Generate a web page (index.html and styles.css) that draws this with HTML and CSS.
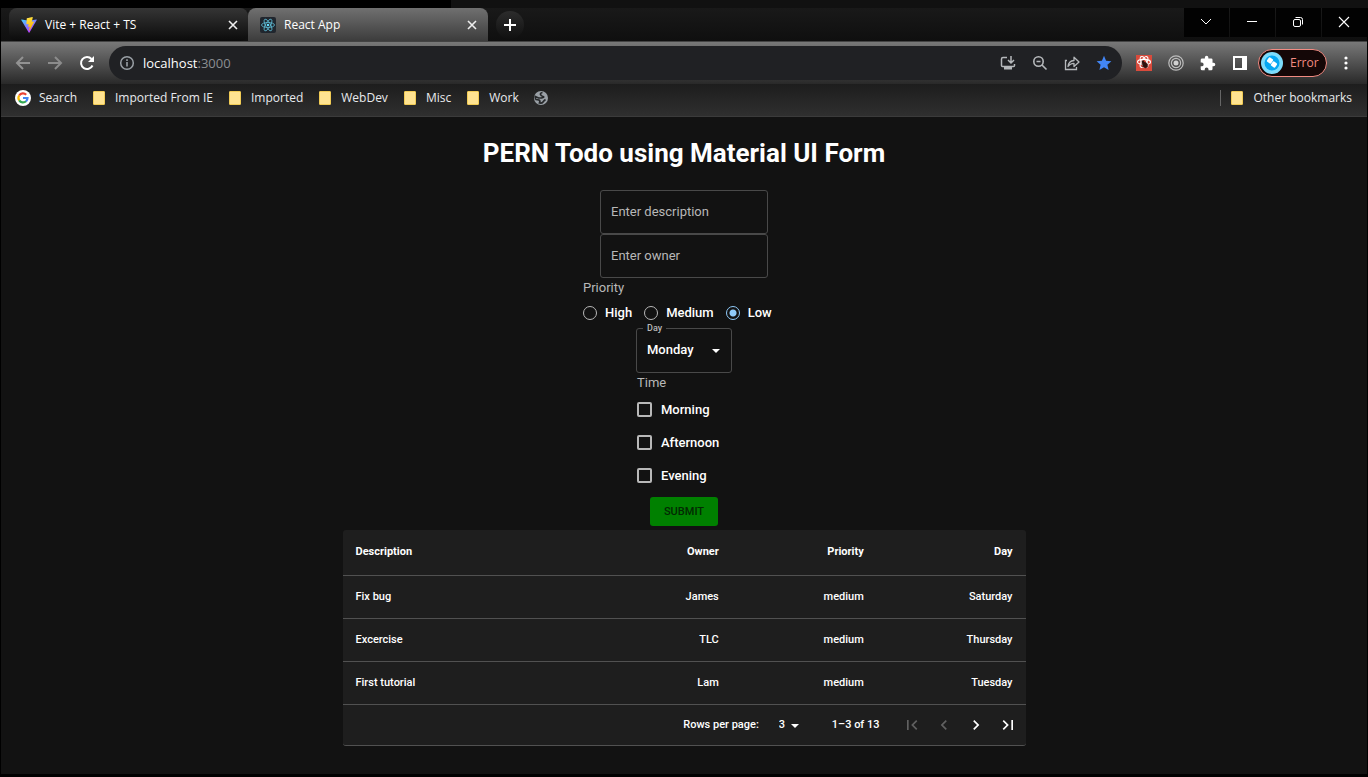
FILE: index.html
```html
<!DOCTYPE html>
<html lang="en">
<head>
<meta charset="utf-8">
<meta name="viewport" content="width=device-width, initial-scale=1">
<title>React App</title>
<link rel="stylesheet" href="styles.css">
</head>
<body>
<div class="backdrop"></div>
<div class="window">
  <header class="tabstrip">
    <div class="tab">
      <svg class="favicon" width="16" height="16" viewBox="0 0 32 32"><defs><linearGradient id="va" x1="0" y1="0" x2=".6" y2="1"><stop offset="0" stop-color="#41d1ff"/><stop offset="1" stop-color="#bd34fe"/></linearGradient><linearGradient id="vb" x1=".4" y1="0" x2=".6" y2="1"><stop offset="0" stop-color="#ffea83"/><stop offset=".1" stop-color="#ffdd35"/><stop offset="1" stop-color="#ffa800"/></linearGradient></defs><path fill="url(#va)" d="M31.5 6 17 31q-.8 1.2-1.6 0L.5 6Q0 4.600 1.500 4.800L16 7.400 30.500 4.800Q32 4.700 31.500 6Z"/><path fill="url(#vb)" d="M22.800.2 12 2.300q-.5.1-.5.6L10.800 14q0 .7.700.6l3-.7q.8-.1.700.7l-.9 4.400q-.1.800.7.600l1.800-.6q.8-.1.700.7l-1.400 6.800q0 1.500 1 .3L26 10q.5-1-.6-1l-3.200.6q-.8.100-.6-.7l2-7.800q.2-1-.8-.9Z"/></svg>
      <span class="tab-title">Vite + React + TS</span>
      <button class="tab-close" aria-label="Close tab"><svg width="10" height="10" viewBox="0 0 10 10"><path d="M1 1l8 8M9 1L1 9" stroke="#eee" stroke-width="1.600"/></svg></button>
    </div>
    <div class="tab tab-active">
      <svg class="favicon" width="16" height="16" viewBox="0 0 32 32"><rect width="32" height="32" rx="4" fill="#20262e"/><g fill="none" stroke="#5bb4cc" stroke-width="1.700"><ellipse cx="16" cy="16" rx="13" ry="5"/><ellipse cx="16" cy="16" rx="13" ry="5" transform="rotate(60 16 16)"/><ellipse cx="16" cy="16" rx="13" ry="5" transform="rotate(120 16 16)"/></g><circle cx="16" cy="16" r="2.600" fill="#61dafb"/></svg>
      <span class="tab-title">React App</span>
      <button class="tab-close" aria-label="Close tab"><svg width="10" height="10" viewBox="0 0 10 10"><path d="M1 1l8 8M9 1L1 9" stroke="#eee" stroke-width="1.600"/></svg></button>
    </div>
    <button class="new-tab" aria-label="New tab"><svg width="12" height="12" viewBox="0 0 12 12"><path d="M6 0v12M0 6h12" stroke="#fff" stroke-width="2"/></svg></button>
    <div class="window-controls">
      <button aria-label="Search tabs"><svg width="12" height="12" viewBox="0 0 12 12"><path d="M1 3l5 5 5-5" fill="none" stroke="#fff"/></svg></button>
      <button aria-label="Minimize"><svg width="12" height="12" viewBox="0 0 12 12"><path d="M1 5.500h10" stroke="#fff"/></svg></button>
      <button aria-label="Restore"><svg width="12" height="12" viewBox="0 0 12 12"><g fill="none" stroke="#fff"><rect x="1.500" y="3.500" width="7" height="7" rx="1.500"/><path d="M3.500 1.500h5a2 2 0 0 1 2 2v5"/></g></svg></button>
      <button aria-label="Close"><svg width="12" height="12" viewBox="0 0 12 12"><path d="M1 1l10 10M11 1L1 11" stroke="#fff" stroke-width="1.100"/></svg></button>
    </div>
  </header>

  <nav class="toolbar" aria-label="Navigation">
    <button class="tool" aria-label="Back"><svg width="16" height="16" viewBox="0 0 16 16"><path d="M15 8H2M8 2L2 8l6 6" fill="none" stroke="#929292" stroke-width="2"/></svg></button>
    <button class="tool" aria-label="Forward"><svg width="16" height="16" viewBox="0 0 16 16"><path d="M1 8h13M8 2l6 6-6 6" fill="none" stroke="#8c8c8c" stroke-width="2"/></svg></button>
    <button class="tool" aria-label="Reload"><svg width="16" height="16" viewBox="0 0 16 16"><path d="M13.500 10.500a6 6 0 1 1-1-6.500" fill="none" stroke="#fff" stroke-width="2"/><path d="M15 1v6H9Z" fill="#fff"/></svg></button>
    <div class="omnibox">
      <svg width="16" height="16" viewBox="0 0 16 16"><circle cx="8" cy="8" r="6.300" fill="none" stroke="#9aa0a6" stroke-width="1.500"/><path d="M8 7v4.500M8 4.200v1.700" stroke="#9aa0a6" stroke-width="1.600"/></svg>
      <div class="address" role="textbox" aria-label="Address" tabindex="0">localhost<span>:3000</span></div>
      <button class="tool" aria-label="Install app"><svg width="16" height="16" viewBox="0 0 16 16"><path d="M7 2.500H3q-1.500 0-1.500 1.500v6.500q0 1 1 1h11q1 0 1-1V9M11 1v6.500M8 5l3 3 3-3" fill="none" stroke="#b5b8bb" stroke-width="1.500"/><path d="M4 12h8v2.500H4Z" fill="#b5b8bb"/></svg></button>
      <button class="tool" aria-label="Zoom"><svg width="16" height="16" viewBox="0 0 16 16"><circle cx="6.500" cy="6.500" r="4.700" fill="none" stroke="#b5b8bb" stroke-width="1.600"/><path d="M10 10l4.500 4.500M4.500 6.500h4" stroke="#b5b8bb" stroke-width="1.600"/></svg></button>
      <button class="tool" aria-label="Share"><svg width="16" height="16" viewBox="0 0 16 16"><path d="M3 5.500H1.500v9h11V12" fill="none" stroke="#b5b8bb" stroke-width="1.300"/><path d="M4 11.500q.5-5.500 6-6V2.200L15 7l-5 4.500V8.300Q6 8.300 4 11.500Z" fill="none" stroke="#b5b8bb" stroke-width="1.300" stroke-linejoin="round"/></svg></button>
      <button class="tool" aria-label="Bookmark this tab"><svg width="16" height="16" viewBox="0 0 16 16"><path d="M8 .8l2.100 4.900 5.300.5-4 3.500 1.200 5.200L8 12.200l-4.600 2.700 1.200-5.200-4-3.500 5.300-.5Z" fill="#4285f4"/></svg></button>
    </div>
    <button class="tool" aria-label="React developer tools"><svg width="16" height="16" viewBox="0 0 16 16"><rect width="16" height="16" fill="#d94b3c"/><g fill="none" stroke="#fff" stroke-width="1.100"><ellipse cx="8" cy="7" rx="6.500" ry="2.600"/><ellipse cx="8" cy="7" rx="6" ry="2.600" transform="rotate(60 8 7)"/><ellipse cx="8" cy="7" rx="6" ry="2.600" transform="rotate(120 8 7)"/></g><ellipse cx="9" cy="10" rx="2.400" ry="3" fill="#30120e" transform="rotate(-35 9 10)"/><circle cx="7" cy="7" r="1.400" fill="#30120e"/><path d="M5.500 9l5-1M6 12l6-3M9 13l3-1.500" stroke="#30120e" stroke-width=".8"/></svg></button>
    <button class="tool" aria-label="Extension"><svg width="16" height="16" viewBox="0 0 16 16"><g fill="none" stroke="#bdbdbd" stroke-width="1.200"><circle cx="8" cy="8" r="7.200"/><circle cx="8" cy="8" r="4.600"/></g><circle cx="8" cy="8" r="2.500" fill="#d0d0d0"/></svg></button>
    <button class="tool" aria-label="Extensions"><svg width="16" height="16" viewBox="1 0 23 23"><path fill="#fff" d="M20.500 11H19V7a2 2 0 0 0-2-2h-4V3.500a2.500 2.500 0 0 0-5 0V5H4a2 2 0 0 0-2 2v3.800h1.500a2.700 2.700 0 0 1 0 5.400H2V20a2 2 0 0 0 2 2h3.800v-1.500a2.700 2.700 0 0 1 5.400 0V22H17a2 2 0 0 0 2-2v-4h1.500a2.500 2.500 0 0 0 0-5Z"/></svg></button>
    <button class="tool" aria-label="Side panel"><svg width="14" height="14" viewBox="0 0 14 14"><path fill="#fff" fill-rule="evenodd" d="M0 0h14v14H0ZM2 2v10h7V2Z"/></svg></button>
    <button class="profile"><svg width="22" height="22" viewBox="0 0 22 22"><circle cx="11" cy="11" r="11" fill="#7ddcfb"/><circle cx="11" cy="11" r="7.500" fill="#06a7f2"/><rect x="6.500" y="6" width="5" height="5" rx="1" fill="#fff" transform="rotate(35 9 8.500)"/><rect x="10.500" y="10" width="5" height="5" rx="1" fill="#fff" transform="rotate(35 13 12.500)"/></svg><span>Error</span></button>
    <button class="tool menu" aria-label="Menu"><svg width="4" height="14" viewBox="0 0 4 14"><g fill="#fff"><circle cx="2" cy="2" r="1.600"/><circle cx="2" cy="7" r="1.600"/><circle cx="2" cy="12" r="1.600"/></g></svg></button>
  </nav>

  <nav class="bookmarks" aria-label="Bookmarks">
    <a class="bookmark" href="#"><svg width="16" height="16" viewBox="0 0 16 16"><circle cx="8" cy="8" r="8" fill="#fff"/><g fill="none" stroke-width="2.200"><path d="M4.200 5.500A4.500 4.500 0 0 1 11.200 4.800" stroke="#ea4335"/><path d="M4.200 10.400a4.500 4.500 0 0 1 0-4.900" stroke="#fbbc05"/><path d="M11 11.300a4.500 4.500 0 0 1-6.800-.9" stroke="#34a853"/><path d="M8 8h4.500q0 2-1.500 3.300" stroke="#4285f4"/></g></svg>Search</a>
    <a class="bookmark" href="#"><i class="folder"></i>Imported From IE</a>
    <a class="bookmark" href="#"><i class="folder"></i>Imported</a>
    <a class="bookmark" href="#"><i class="folder"></i>WebDev</a>
    <a class="bookmark" href="#"><i class="folder"></i>Misc</a>
    <a class="bookmark" href="#"><i class="folder"></i>Work</a>
    <a class="bookmark" href="#" aria-label="Site"><svg width="16" height="16" viewBox="0 0 16 16"><circle cx="8" cy="8" r="7" fill="#9aa0a6"/><path d="M9.500 2.500Q7 3 7.500 4.500T10 6.500 8.500 8H5.500L2.300 6.500Q2 8.500 3 9.500l3 .5q1.500 1 .5 3Q9 13.500 10 12t2.500-2.500" fill="none" stroke="#26282a" stroke-width="1.700"/></svg></a>
    <a class="bookmark other" href="#"><i class="folder"></i>Other bookmarks</a>
  </nav>

  <main class="page">
    <h1>PERN Todo using Material UI Form</h1>
    <form class="todo-form">
      <input class="text-field" type="text" placeholder="Enter description" aria-label="Enter description">
      <input class="text-field" type="text" placeholder="Enter owner" aria-label="Enter owner">
      <fieldset class="group priority">
        <legend>Priority</legend>
        <div class="radios">
          <label><input type="radio" name="priority">High</label>
          <label><input type="radio" name="priority">Medium</label>
          <label><input type="radio" name="priority" checked>Low</label>
        </div>
      </fieldset>
      <div class="day-field">
        <label for="day">Day</label>
        <select id="day"><option>Monday</option><option>Tuesday</option><option>Thursday</option><option>Saturday</option></select>
        <svg class="caret" width="8" height="4" viewBox="0 0 8 4"><path d="M0 0h8L4 4Z" fill="#fff"/></svg>
      </div>
      <fieldset class="group time">
        <legend>Time</legend>
        <label><input type="checkbox">Morning</label>
        <label><input type="checkbox">Afternoon</label>
        <label><input type="checkbox">Evening</label>
      </fieldset>
      <button class="submit" type="button">SUBMIT</button>
    </form>

    <div class="paper">
      <table>
        <colgroup><col class="c-desc"><col class="c-owner"><col class="c-priority"><col></colgroup>
        <thead><tr><th>Description</th><th>Owner</th><th>Priority</th><th>Day</th></tr></thead>
        <tbody>
          <tr><td>Fix bug</td><td>James</td><td>medium</td><td>Saturday</td></tr>
          <tr><td>Excercise</td><td>TLC</td><td>medium</td><td>Thursday</td></tr>
          <tr><td>First tutorial</td><td>Lam</td><td>medium</td><td>Tuesday</td></tr>
        </tbody>
      </table>
      <div class="pagination">
        <label for="rows">Rows per page:</label>
        <div class="rows-field">
          <select id="rows"><option>3</option><option>5</option><option>10</option></select>
          <svg class="caret" width="8" height="4" viewBox="0 0 8 4"><path d="M0 0h8L4 4Z" fill="#fff"/></svg>
        </div>
        <span class="range">1–3 of 13</span>
        <button aria-label="First page" disabled><svg width="20" height="20" viewBox="0 0 24 24"><path d="M18.410 16.590 13.820 12l4.590-4.590L17 6l-6 6 6 6zM6 6h2v12H6z"/></svg></button>
        <button aria-label="Previous page" disabled><svg width="20" height="20" viewBox="0 0 24 24"><path d="M15.410 16.590 10.830 12l4.580-4.590L14 6l-6 6 6 6z"/></svg></button>
        <button aria-label="Next page"><svg width="20" height="20" viewBox="0 0 24 24"><path d="M8.590 16.590 13.170 12 8.590 7.410 10 6l6 6-6 6z"/></svg></button>
        <button aria-label="Last page"><svg width="20" height="20" viewBox="0 0 24 24"><path d="M5.590 7.410 10.180 12l-4.590 4.590L7 18l6-6-6-6zM16 6h2v12h-2z"/></svg></button>
      </div>
    </div>
  </main>
</div>
</body>
</html>
```

FILE: styles.css
```css
* { box-sizing: border-box; }
html, body { height: 100%; }
body {
  margin: 0;
  display: flex;
  flex-direction: column;
  background: #000;
  color: #fff;
  font: 12px/16px "Open Sans", sans-serif;
}
button {
  margin: 0;
  padding: 0;
  border: 0;
  background: none;
  color: inherit;
  font: inherit;
  display: flex;
  align-items: center;
  justify-content: center;
}
svg { display: block; flex: none; }

.backdrop {
  flex: none;
  height: 8px;
  background: linear-gradient(90deg, #000 33%, #111 33%);
}
.window {
  flex: 1;
  display: flex;
  flex-direction: column;
  margin: 0 1px 3px;
}

/* Tab strip */
.tabstrip {
  display: flex;
  height: 33px;
  padding-left: 8px;
  background: linear-gradient(#191919, #0f0f0f);
}
.tab {
  display: flex;
  align-items: center;
  gap: 8px;
  width: 239px;
  padding: 0 10px 0 12px;
  border-radius: 8px;
  background: linear-gradient(#353535, #0b0b0b);
}
.tab-active {
  border-radius: 8px 8px 0 0;
  background: linear-gradient(#707070, #3c3c3c);
  width: 240px;
  padding-right: 11px;
}
.tab-title { flex: 1; }
.new-tab {
  width: 28px;
  height: 28px;
  margin: 3px 0 0 8px;
  border-radius: 50%;
  background: linear-gradient(#2c2c2c, #101010);
}
.window-controls {
  display: flex;
  gap: 1px;
  margin-left: auto;
}
.window-controls button {
  width: 45px;
  height: 29px;
  padding: 0 1px 1px 0;
  background: #020202;
}

/* Toolbar */
.toolbar {
  display: flex;
  align-items: center;
  height: 43px;
  padding: 0 5px 0 6px;
  border-top: 1px solid #444;
  background: linear-gradient(#787878, #292929);
}
.tool { width: 32px; height: 32px; flex: none; }
.omnibox {
  flex: 1;
  display: flex;
  align-items: center;
  height: 34px;
  margin: 0 6px;
  padding: 0 2px 0 10px;
  border-radius: 17px;
  background: #202124;
}
.address {
  flex: 1;
  margin-left: 8px;
  font-size: 13px;
  line-height: 18px;
}
.address span { color: #8b8e92; }
.profile {
  gap: 7px;
  width: 69px;
  height: 28px;
  margin: 0 3px 0 2px;
  padding: 0 9px 0 2px;
  justify-content: flex-start;
  border: 1px solid #f28b82;
  border-radius: 14px;
  background: #140707;
  color: #f28b82;
}

/* Bookmarks */
.bookmarks {
  display: flex;
  align-items: center;
  gap: 14px;
  height: 33px;
  padding: 0 15px 4px 14px;
  border-bottom: 1px solid #3b3b3b;
  background: linear-gradient(#1d1d1d, #2f2f2f);
}
.bookmark {
  display: flex;
  align-items: center;
  gap: 8px;
  color: #e8eaed;
  text-decoration: none;
  white-space: nowrap;
}
.folder {
  width: 12px;
  height: 14px;
  margin: 0 2px;
  border: 1px solid #f2cc55;
  border-radius: 1px;
  background: #ffe391;
}
.other {
  margin-left: auto;
  padding-left: 8px;
  border-left: 1px solid #666;
}

/* Page */
.page {
  flex: 1;
  display: flex;
  flex-direction: column;
  align-items: center;
  padding-top: 16px;
  background: #121212;
  font: 500 13px/18px Roboto, sans-serif;
}
h1 {
  margin: 0 0 17px;
  font-size: 26px;
  line-height: 40px;
  font-weight: 700;
}
.todo-form {
  display: flex;
  flex-direction: column;
  align-items: center;
}
.text-field {
  width: 168px;
  height: 44px;
  padding: 0 10px 2px;
  border: 1px solid #494949;
  border-radius: 3px;
  background: none;
  color: #fff;
  font: 400 13px/18px Roboto, sans-serif;
}
.text-field::placeholder { color: #b8b8b8; opacity: 1; }
.group {
  margin: 0;
  padding: 0;
  border: 0;
  min-width: 0;
}
.group legend {
  padding: 0;
  font-weight: 400;
  color: #b8b8b8;
}
.group label { display: flex; align-items: center; }
.group input {
  appearance: none;
  margin: 0;
  flex: none;
  border: 2px solid #b8b8b8;
}
.priority { width: 202px; margin-top: 1px; }
.radios {
  display: flex;
  align-items: center;
  gap: 12px;
  height: 31px;
}
.radios label { gap: 8px; }
.radios input {
  width: 14px;
  height: 14px;
  border-width: 1px;
  border-radius: 50%;
}
.radios input:checked {
  border-color: #90caf9;
  background: radial-gradient(circle, #90caf9 3px, transparent 4px);
}
.day-field {
  position: relative;
  width: 96px;
}
.day-field label {
  position: absolute;
  top: -7px;
  left: 7px;
  padding: 0 4px;
  background: #121212;
  color: #b8b8b8;
  font-size: 9px;
  line-height: 14px;
}
select {
  appearance: none;
  border: 0;
  background: none;
  color: #fff;
  font: inherit;
}
.day-field select {
  display: block;
  width: 100%;
  height: 45px;
  padding: 0 10px 2px;
  border: 1px solid #494949;
  border-radius: 3px;
}
.day-field .caret {
  position: absolute;
  right: 12px;
  top: 21px;
  pointer-events: none;
}
.time { width: 94px; }
.time legend { line-height: 20px; }
.time label { gap: 9px; height: 33px; }
.time input {
  width: 15px;
  height: 15px;
  border-radius: 2px;
}
.submit {
  width: 68px;
  height: 29px;
  margin: 5px 0 4px;
  border-radius: 3px;
  background: green;
  color: #032903;
  font-size: 11px;
}

/* Table */
.paper {
  width: 50%;
  min-width: 480px;
  border-radius: 3px;
  background: #1e1e1e;
  font-size: 11px;
  line-height: 16px;
}
table {
  width: 100%;
  border-collapse: collapse;
  table-layout: fixed;
}
.c-desc { width: 41%; }
.c-owner { width: 16%; }
.c-priority { width: 145px; }
th, td {
  height: 43px;
  padding: 0 13px;
  border-bottom: 1px solid #515151;
  text-align: right;
}
th { height: 45px; font-weight: 700; }
th:first-child, td:first-child { text-align: left; }
.pagination {
  display: flex;
  align-items: center;
  justify-content: flex-end;
  height: 41px;
  padding-right: 2px;
  border-bottom: 1px solid #515151;
  border-radius: 0 0 3px 3px;
}
.rows-field {
  position: relative;
  width: 28px;
  margin: 0 29px 0 16px;
}
.rows-field select {
  width: 100%;
  padding: 0 4px;
}
.rows-field .caret {
  position: absolute;
  right: 4px;
  top: 7px;
  pointer-events: none;
}
.range { margin-right: 16px; }
.pagination button { width: 32px; height: 32px; }
.pagination button svg { fill: #fff; }
.pagination button:disabled svg { fill: #616161; }
```
